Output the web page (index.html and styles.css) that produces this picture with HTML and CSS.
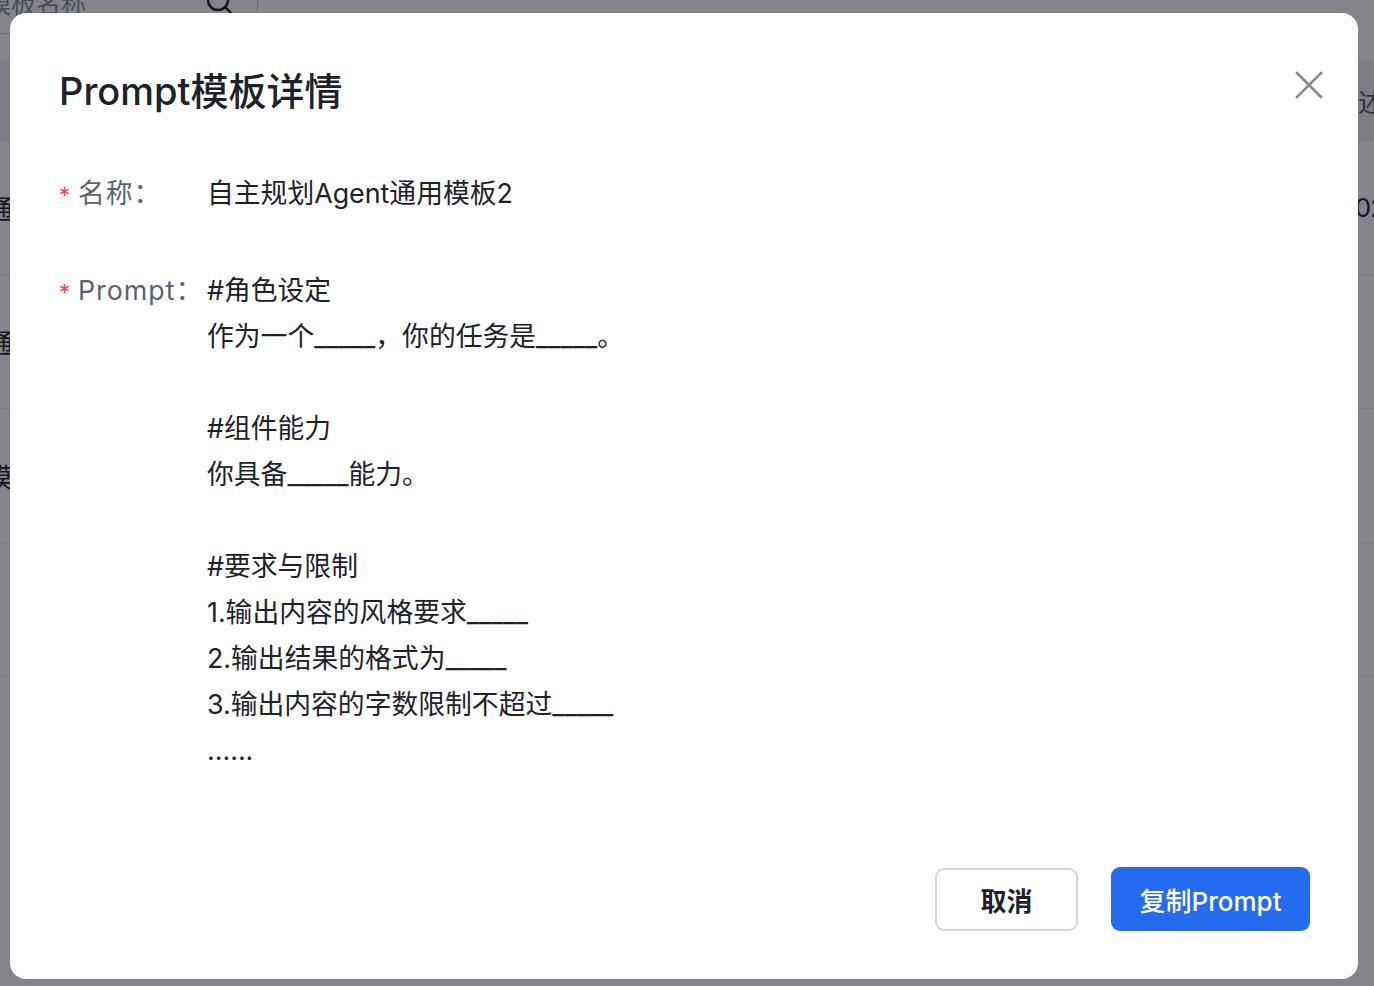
FILE: index.html
```html
<!DOCTYPE html>
<html lang="zh-CN">
<head>
    <meta charset="UTF-8">
    <meta name="viewport" content="width=device-width, initial-scale=1.0">
    <title>Prompt模板详情</title>
    <link rel="stylesheet" href="styles.css">
</head>
<body>
    <div class="page">
        <div class="toolbar">
            <div class="search">
                <span class="search-text">模板名称</span>
                <svg class="search-icon" width="28" height="28" viewBox="0 0 28 28" fill="none" stroke="#1d2129" stroke-width="2.4">
                    <circle cx="13" cy="12" r="10"/>
                    <path d="M20.5 19.5l5 5" stroke-linecap="round"/>
                </svg>
            </div>
        </div>
        <div class="table">
            <div class="row head">
                <div class="cell"></div>
                <div class="cell side">描述</div>
            </div>
            <div class="row">
                <div class="cell">Agent通用模板1</div>
                <div class="cell side date">2024-02-18</div>
            </div>
            <div class="row">
                <div class="cell">Agent通用模板2</div>
                <div class="cell side date"></div>
            </div>
            <div class="row">
                <div class="cell">ReAct模板</div>
                <div class="cell side date"></div>
            </div>
            <div class="row">
                <div class="cell"></div>
                <div class="cell side"></div>
            </div>
        </div>
    </div>

    <div class="mask"></div>

    <div class="modal">
        <div class="modal-header">
            <h2 class="modal-title">Prompt模板详情</h2>
            <button class="close" aria-label="关闭">
                <svg width="30" height="30" viewBox="0 0 30 30" fill="none" stroke="#86898f" stroke-width="2.6" stroke-linecap="square">
                    <path d="M3 3l24 24M27 3L3 27"/>
                </svg>
            </button>
        </div>

        <div class="modal-body">
            <div class="field">
                <div class="label"><span class="required">*</span><span>名称：</span></div>
                <div class="value">自主规划Agent通用模板2</div>
            </div>
            <div class="field field-prompt">
                <div class="label"><span class="required">*</span><span>Prompt：</span></div>
                <div class="value prompt">#角色设定
作为一个_____，你的任务是_____。

#组件能力
你具备_____能力。

#要求与限制
1.输出内容的风格要求_____
2.输出结果的格式为_____
3.输出内容的字数限制不超过_____
......</div>
            </div>
        </div>

        <div class="modal-footer">
            <button class="btn btn-default">取消</button>
            <button class="btn btn-primary">复制Prompt</button>
        </div>
    </div>
</body>
</html>
```

FILE: styles.css
```css
body {
    margin: 0;
    font-family: Inter, "Noto Sans CJK SC", sans-serif;
    color: #1d2129;
    background-color: #ffffff;
    overflow: hidden;
    height: 100vh;
}
.page {
    margin-left: -86px;
    margin-top: -30px;
}
.toolbar {
    display: flex;
    height: 90px;
}
.search {
    width: 344px;
    height: 64px;
    box-sizing: border-box;
    border-right: 1px solid #c9cdd4;
    border-bottom: 1px solid #c9cdd4;
    display: flex;
    align-items: center;
    justify-content: space-between;
    padding: 0 24px 0 72px;
}
.search-text {
    font-size: 25px;
    color: #86909c;
}
.search-icon {
    display: block;
}
.row {
    display: grid;
    grid-template-columns: 1418px 1fr;
    height: 134px;
    box-sizing: border-box;
    align-items: center;
    border-bottom: 1px solid #e5e6eb;
    font-size: 26px;
    white-space: nowrap;
}
.row.head {
    height: 81px;
    background-color: #eef0f3;
    color: #4e5969;
}
.cell.date {
    padding-left: 8px;
    letter-spacing: -1px;
}
.mask {
    position: fixed;
    inset: 0;
    background-color: rgba(10, 12, 22, 0.5);
}
.modal {
    position: fixed;
    left: 10px;
    top: 13px;
    width: 1348px;
    height: 966px;
    box-sizing: border-box;
    background-color: #ffffff;
    border-radius: 16px;
    display: flex;
    flex-direction: column;
    padding: 0 48px 48px 49px;
}
.modal-header {
    display: flex;
    justify-content: space-between;
    align-items: center;
    height: 156px;
}
.modal-title {
    margin: 0;
    font-size: 38px;
    font-weight: 500;
    color: #1d2129;
    line-height: 52px;
}
.close {
    border: none;
    background: none;
    padding: 0;
    margin-right: -14px;
    margin-top: -12px;
    cursor: pointer;
    display: flex;
}
.modal-body {
    display: flex;
    flex-direction: column;
    gap: 51px;
}
.field {
    display: flex;
    font-size: 26.8px;
    line-height: 46px;
}
.field:first-child {
    margin-top: 1px;
}
.label {
    width: 148px;
    flex-shrink: 0;
    display: flex;
    align-items: baseline;
    color: #5c6370;
    letter-spacing: 1px;
}
.required {
    color: #f53f3f;
    width: 19px;
    font-size: 22px;
    line-height: 40px;
}
.value {
    color: #1d2129;
}
.prompt {
    white-space: pre-wrap;
}
.modal-footer {
    margin-top: auto;
    display: flex;
    justify-content: flex-end;
    align-items: center;
    gap: 33px;
}
.btn {
    font-family: inherit;
    font-size: 26px;
    border-radius: 9px;
    cursor: pointer;
    height: 64px;
}
.btn-default {
    width: 143px;
    height: 63px;
    background-color: #ffffff;
    border: 2px solid #d4d6db;
    color: #1d2129;
    font-weight: 600;
}
.btn-primary {
    width: 199px;
    background-color: #246bf0;
    border: none;
    color: #ffffff;
    font-weight: 500;
}
```
